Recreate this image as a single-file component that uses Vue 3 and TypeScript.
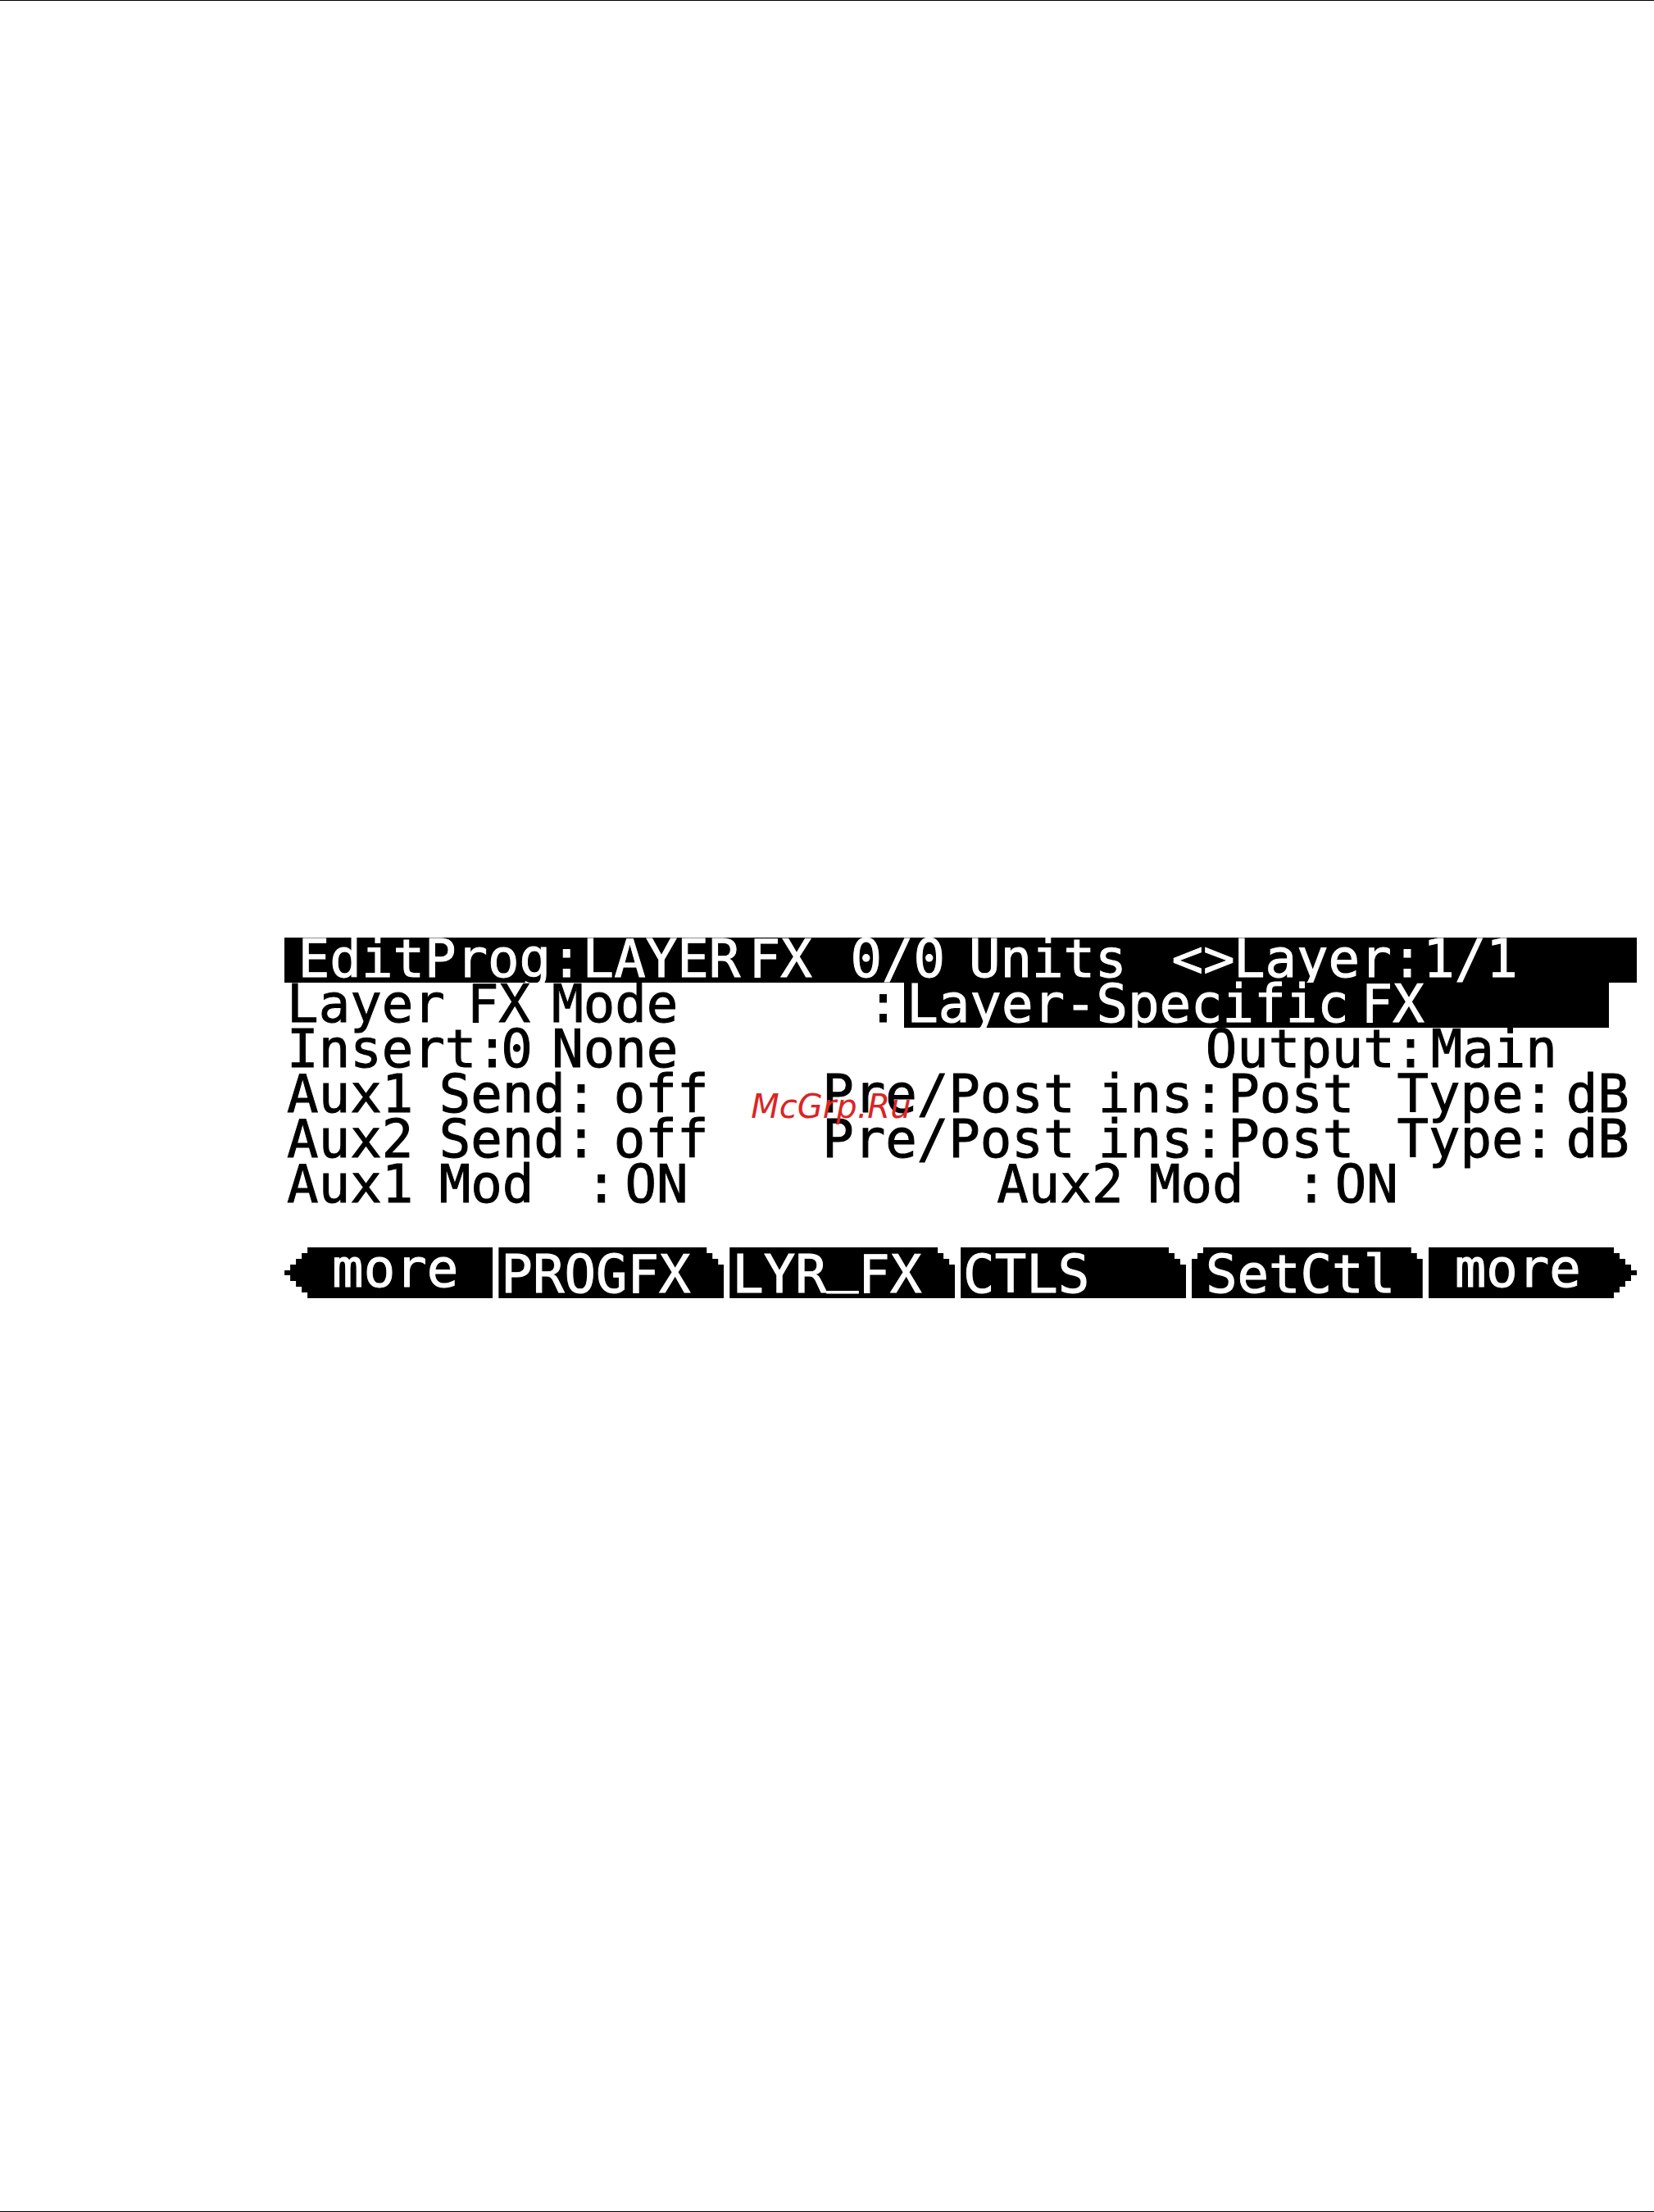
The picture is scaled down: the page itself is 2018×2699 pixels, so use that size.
<script setup lang="ts">
interface Word {
  text: string
  col: number
  selected?: boolean
}

interface SoftKey {
  parts: string[]
  shape: string
}

// The display is 240 dots wide; every word starts on a dot column.
const DOTS = 240
const CHAR_DOTS = 6

const title: Word[] = [
  { text: 'EditProg:LAYER', col: 2 },
  { text: 'FX', col: 82 },
  { text: '0/0', col: 100 },
  { text: 'Units', col: 121 },
  { text: '<>', col: 157 },
  { text: 'Layer:1/1', col: 168 },
]

const auxRow = (name: string): Word[] => [
  { text: name, col: 0 },
  { text: 'Send:', col: 27 },
  { text: 'off', col: 58 },
  { text: 'Pre/Post', col: 95 },
  { text: 'ins:', col: 144 },
  { text: 'Post', col: 167 },
  { text: 'Type:', col: 197 },
  { text: 'dB', col: 227 },
]

const rows: Word[][] = [
  [
    { text: 'Layer', col: 0 },
    { text: 'FX', col: 32 },
    { text: 'Mode', col: 47 },
    { text: ':', col: 103 },
    { text: 'Layer-Specific FX', col: 110, selected: true },
  ],
  [
    { text: 'Insert:', col: 0 },
    { text: '0', col: 38 },
    { text: 'None', col: 47 },
    { text: 'Output:', col: 163 },
    { text: 'Main', col: 203 },
  ],
  auxRow('Aux1'),
  auxRow('Aux2'),
  [
    { text: 'Aux1', col: 0 },
    { text: 'Mod', col: 27 },
    { text: ':', col: 53 },
    { text: 'ON', col: 60 },
    { text: 'Aux2', col: 126 },
    { text: 'Mod', col: 153 },
    { text: ':', col: 179 },
    { text: 'ON', col: 186 },
  ],
]

const softKeys: SoftKey[] = [
  { parts: ['more'], shape: 'prev' },
  { parts: ['PROGFX'], shape: 'tab' },
  { parts: ['LYR', '_', 'FX'], shape: 'tab' },
  { parts: ['CTLS'], shape: 'tab' },
  { parts: ['SetCtl'], shape: 'setup' },
  { parts: ['more'], shape: 'next' },
]

function place(word: Word) {
  const span = word.selected ? 125 : Math.min(word.text.length * CHAR_DOTS, DOTS - word.col)
  return { gridColumn: `${word.col + 1} / span ${span}` }
}
</script>

<template>
  <main class="page">
    <section class="lcd" aria-label="Layer FX page">
      <h1 class="line title">
        <span v-for="word in title" :key="word.col" class="word" :style="place(word)">{{ word.text }}</span>
      </h1>
      <p v-for="(row, i) in rows" :key="i" class="line">
        <span
          v-for="word in row"
          :key="word.col"
          :class="['word', { selected: word.selected }]"
          :style="place(word)"
        ><span v-for="part in word.text.split(' ')" :key="part">{{ part }}</span></span>
      </p>
      <nav class="keys">
        <button v-for="(key, i) in softKeys" :key="i" type="button" :class="['key', key.shape]">
          <span v-for="part in key.parts" :key="part" :class="{ underscore: part === '_' }">{{ part }}</span>
        </button>
      </nav>
      <span class="watermark">McGrp.Ru</span>
    </section>
  </main>
</template>

<style>
body {
  margin: 0;
  background: #fff;
}
</style>

<style scoped>
.page {
  box-sizing: border-box;
  min-height: 100vh;
  padding: 1143px 21px 0 17.2%;
  border-top: 1px solid #000;
  border-bottom: 1px solid #000;
  overflow: hidden;
}

.lcd {
  position: relative;
  font-family: "DejaVu Sans Mono", "Liberation Mono", monospace;
  font-size: 64px;
  line-height: 52px;
  color: #000;
}

.line {
  display: grid;
  grid-template-columns: repeat(240, minmax(0, 1fr));
  height: 55px;
  margin: 0;
  font-size: 64px;
  font-weight: 400;
  white-space: nowrap;
  -webkit-text-stroke: 1px currentColor;
}

.word {
  grid-row: 1;
  height: 55px;
  padding-left: 3px;
}

.title {
  background: #000;
  color: #fff;
}

.selected {
  display: flex;
  gap: 15px;
  background: #000;
  color: #fff;
}

.keys {
  display: grid;
  grid-template-columns: 37fr 40fr 40fr 40fr 41fr 37fr;
  gap: 7px;
  margin-top: 48px;
}

.key {
  display: flex;
  align-items: flex-start;
  min-width: 0;
  height: 62px;
  margin: 0;
  padding: 7px 0 0 3px;
  border: 0;
  background: #000;
  color: #fff;
  font: inherit;
  white-space: nowrap;
  -webkit-text-stroke: 1px currentColor;
}

/* The display font has no descenders, so the underscore rests on the baseline. */
.underscore {
  margin-top: -14px;
}

.tab {
  clip-path: polygon(
    0 0,
    calc(100% - 21px) 0, calc(100% - 21px) 7px,
    calc(100% - 14px) 7px, calc(100% - 14px) 14px,
    calc(100% - 7px) 14px, calc(100% - 7px) 21px,
    100% 21px, 100% 100%,
    0 100%
  );
}

.setup {
  padding-left: 17px;
  clip-path: polygon(
    0 14px,
    7px 14px, 7px 7px,
    14px 7px, 14px 0,
    calc(100% - 14px) 0, calc(100% - 14px) 7px,
    calc(100% - 7px) 7px, calc(100% - 7px) 14px,
    100% 14px, 100% 100%,
    0 100%
  );
}

.prev {
  padding: 0 0 0 58px;
  clip-path: polygon(
    100% 0,
    28px 0, 28px 7px,
    21px 7px, 21px 14px,
    14px 14px, 14px 21px,
    7px 21px, 7px 28px,
    0 28px, 0 34px,
    7px 34px, 7px 41px,
    14px 41px, 14px 48px,
    21px 48px, 21px 55px,
    28px 55px, 28px 100%,
    100% 100%
  );
}

.next {
  padding: 0 0 0 32px;
  clip-path: polygon(
    0 0,
    calc(100% - 28px) 0, calc(100% - 28px) 7px,
    calc(100% - 21px) 7px, calc(100% - 21px) 14px,
    calc(100% - 14px) 14px, calc(100% - 14px) 21px,
    calc(100% - 7px) 21px, calc(100% - 7px) 28px,
    100% 28px, 100% 34px,
    calc(100% - 7px) 34px, calc(100% - 7px) 41px,
    calc(100% - 14px) 41px, calc(100% - 14px) 48px,
    calc(100% - 21px) 48px, calc(100% - 21px) 55px,
    calc(100% - 28px) 55px, calc(100% - 28px) 100%,
    0 100%
  );
}

.watermark {
  position: absolute;
  top: 182px;
  left: 34.5%;
  font-family: "DejaVu Sans", sans-serif;
  font-size: 40px;
  font-style: italic;
  line-height: 48px;
  color: #dc2424;
}
</style>
